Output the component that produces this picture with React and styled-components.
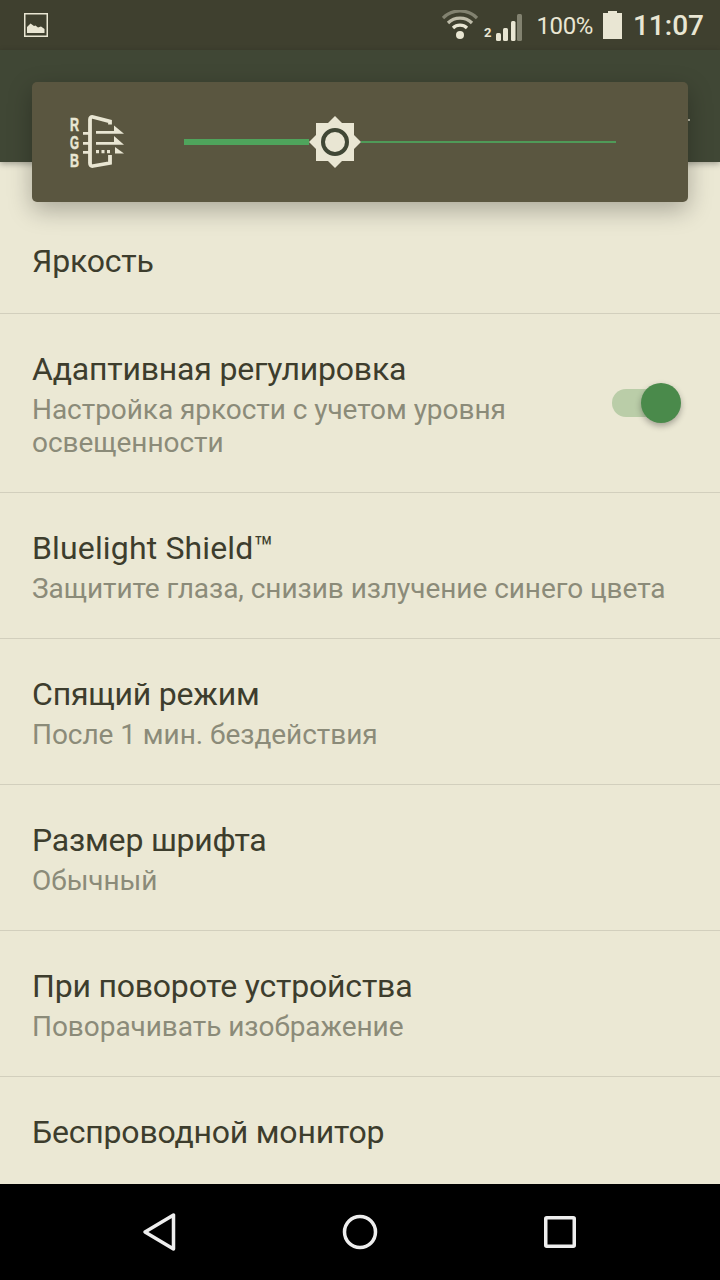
import React from 'react'
import styled, { createGlobalStyle } from 'styled-components'

const GlobalStyle = createGlobalStyle`
  html, body { margin: 0; padding: 0; background: #000; }
  body { font-family: Roboto, "Noto Sans", sans-serif; }
`

const rows = [
  { title: 'Адаптивная регулировка', sub: 'Настройка яркости с учетом уровня освещенности', toggle: true },
  { title: 'Bluelight Shield™', sub: 'Защитите глаза, снизив излучение синего цвета', wide: true },
  { title: 'Спящий режим', sub: 'После 1 мин. бездействия' },
  { title: 'Размер шрифта', sub: 'Обычный' },
  { title: 'При повороте устройства', sub: 'Поворачивать изображение' },
  { title: 'Беспроводной монитор' },
]

function PictureIcon() {
  return (
    <svg width="24" height="24" viewBox="0 0 24 24">
      <rect x="0.75" y="0.75" width="22.5" height="22.5" fill="none" stroke="#e9e6d3" strokeWidth="1.5" />
      <path d="M3 20V14L6.5 10.5L10 13L11.5 12.5L14 14.5L17 13.5L20.5 16V20Z" fill="#e9e6d3" />
    </svg>
  )
}

function WifiIcon() {
  return (
    <svg width="36" height="30" viewBox="0 0 36 30" fill="none" stroke="#e9e6d3" strokeWidth="3.2">
      <path d="M1 8A24 24 0 0 1 35 8" opacity="0.4" />
      <path d="M6 13A17 17 0 0 1 30 13" opacity="0.75" />
      <path d="M11 18A10 10 0 0 1 25 18" />
      <circle cx="18" cy="25" r="4" fill="#e9e6d3" stroke="none" />
    </svg>
  )
}

function SignalIcon() {
  return (
    <SignalSvg width="26" height="27" viewBox="0 0 26 27" fill="#e9e6d3">
      <rect x="0" y="19" width="5" height="8" rx="1.5" />
      <rect x="7" y="14" width="5" height="13" rx="1.5" />
      <rect x="15" y="7" width="4.5" height="20" rx="1.5" />
      <rect x="21" y="0" width="5" height="27" rx="1.5" opacity="0.4" />
    </SignalSvg>
  )
}

function BatteryIcon() {
  return (
    <svg width="19" height="28" viewBox="0 0 19 28" fill="#e9e6d3">
      <path d="M5 0H14V2H19V28H0V2H5Z" />
    </svg>
  )
}

function RgbIcon() {
  return (
    <svg width="58" height="56" viewBox="0 0 58 56">
      <g fill="#e9e6d3" stroke="#e9e6d3" strokeWidth="0.5" fontFamily="Liberation Sans, sans-serif" fontWeight="700" fontSize="18">
        <text x="4" y="17" textLength="9" lengthAdjust="spacingAndGlyphs">R</text>
        <text x="4" y="35" textLength="9" lengthAdjust="spacingAndGlyphs">G</text>
        <text x="4" y="53" textLength="9" lengthAdjust="spacingAndGlyphs">B</text>
      </g>
      <g fill="#e9e6d3">
        <path d="M30 17H48V11.500L58 19.800H30Z" />
        <path d="M30 28H48V22L58 30.800H30Z" />
        <path d="M30 36H33V39.300H30ZM35.500 36H38.500V39.300H35.500ZM41 36H44V39.300H41Z" />
        <path d="M49 33L58 39.500H49Z" />
        <path d="M17 18H23V20.800H17ZM17 28H23V30.800H17ZM17 37H23V39.800H17Z" />
      </g>
      <path
        d="M44 10.500V7.500L27 3Q24 2.500 24 5.500V49Q24 52.500 27 52L44 49V41"
        fill="none"
        stroke="#e9e6d3"
        strokeWidth="3.800"
      />
    </svg>
  )
}

function SunThumb() {
  return (
    <svg width="52" height="52" viewBox="0 0 52 52">
      <rect x="7" y="7" width="38" height="38" fill="#e9e6d3" />
      <path d="M26 0L52 26L26 52L0 26Z" fill="#e9e6d3" />
      <circle cx="26" cy="26" r="12" fill="none" stroke="#404735" strokeWidth="4" />
    </svg>
  )
}

function Row({ title, sub, toggle, wide }) {
  return (
    <SettingRow>
      <RowText $withToggle={toggle}>
        <RowTitle $wide={wide}>{title}</RowTitle>
        {sub && <RowSub>{sub}</RowSub>}
      </RowText>
      {toggle && (
        <Switch>
          <SwitchThumb />
        </Switch>
      )}
    </SettingRow>
  )
}

export default function App() {
  return (
    <Page>
      <GlobalStyle />
      <StatusBar>
        <PictureIcon />
        <StatusRight>
          <WifiIcon />
          <SimNumber>2</SimNumber>
          <SignalIcon />
          <Percent>100%</Percent>
          <BatteryIcon />
          <Clock>11:07</Clock>
        </StatusRight>
      </StatusBar>
      <Toolbar>
        <ToolbarDot />
      </Toolbar>
      <List>
        <Category>Экран</Category>
        <BrightnessRow>
          <RowTitle>Яркость</RowTitle>
        </BrightnessRow>
        {rows.map((r) => (
          <Row key={r.title} {...r} />
        ))}
      </List>
      <NavBar>
        <svg width="36" height="40" viewBox="0 0 36 40" fill="none" stroke="#eeeeee" strokeWidth="3.5" strokeLinejoin="round">
          <path d="M3 20L31.500 3V37Z" />
        </svg>
        <svg width="36" height="36" viewBox="0 0 36 36" fill="none" stroke="#eeeeee" strokeWidth="3.5">
          <circle cx="18" cy="18" r="15.500" />
        </svg>
        <svg width="36" height="36" viewBox="0 0 36 36" fill="none" stroke="#eeeeee" strokeWidth="3.5" strokeLinejoin="round">
          <rect x="3.750" y="3.750" width="28.500" height="28.500" rx="1" />
        </svg>
      </NavBar>
      <BrightnessPanel>
        <RgbSlot>
          <RgbIcon />
        </RgbSlot>
        <Slider>
          <TrackDone />
          <SunThumb />
          <TrackRest />
        </Slider>
      </BrightnessPanel>
    </Page>
  )
}

const Page = styled.div`
  position: relative;
  width: 720px;
  height: 1280px;
  display: flex;
  flex-direction: column;
  overflow: hidden;
  background: #ebe8d4;
`

const StatusBar = styled.div`
  height: 50px;
  flex-shrink: 0;
  display: flex;
  align-items: center;
  justify-content: space-between;
  padding: 0 16px 0 24px;
  box-sizing: border-box;
  background: #3f402f;
  color: #e9e6d3;
`

const StatusRight = styled.div`
  display: flex;
  align-items: center;
`

const SignalSvg = styled.svg`
  margin-top: 5px;
`

const SimNumber = styled.span`
  font: 700 13px/13px Roboto, sans-serif;
  align-self: flex-end;
  margin: 0 4px 3px 6px;
`

const Percent = styled.span`
  font: 400 24px/30px Roboto, sans-serif;
  letter-spacing: -0.4px;
  margin: 2px 10px 0 15px;
`

const Clock = styled.span`
  font: 500 28px/32px Roboto, sans-serif;
  margin: 2px 0 0 11px;
`

const Toolbar = styled.div`
  height: 112px;
  flex-shrink: 0;
  display: flex;
  justify-content: flex-end;
  padding: 69px 30px 0 0;
  box-sizing: border-box;
  background: #404735;
  box-shadow: 0 2px 6px rgba(0, 0, 0, 0.3);
  position: relative;
  z-index: 1;
`

const ToolbarDot = styled.div`
  width: 2px;
  height: 2px;
  background: #b9b8a6;
`

const List = styled.div`
  flex: 1;
  min-height: 0;
  overflow: hidden;
`

const Category = styled.div`
  height: 44px;
  padding: 3px 32px 0;
  box-sizing: border-box;
  font: 500 28px/44px Roboto, sans-serif;
  color: #4a8a4b;
`

const SettingRow = styled.div`
  display: flex;
  align-items: center;
  padding: 33px 39px 33px 32px;
  border-bottom: 1px solid #d2cfbd;
`

const BrightnessRow = styled(SettingRow)`
  padding-bottom: 30px;
`

const RowText = styled.div`
  flex: 1;
  min-width: 0;
  padding-right: ${(p) => (p.$withToggle ? '40px' : '0')};
`

const RowTitle = styled.div`
  font: 400 32px/44px Roboto, sans-serif;
  letter-spacing: ${(p) => (p.$wide ? '0.15px' : '-0.2px')};
  color: #3d3d2d;
`

const RowSub = styled.div`
  margin-top: 2px;
  font: 400 28px/33px Roboto, sans-serif;
  letter-spacing: -0.05px;
  color: #8b8b79;
`

const Switch = styled.div`
  position: relative;
  width: 64px;
  height: 28px;
  margin: 0 5px 1px 0;
  flex-shrink: 0;
  border-radius: 14px;
  background: #bacda8;
`

const SwitchThumb = styled.div`
  position: absolute;
  top: -6px;
  right: -5px;
  width: 40px;
  height: 40px;
  border-radius: 50%;
  background: #4a8a4b;
  box-shadow: 0 3px 6px rgba(0, 0, 0, 0.3);
`

const NavBar = styled.div`
  height: 96px;
  flex-shrink: 0;
  display: flex;
  align-items: center;
  justify-content: center;
  gap: 164px;
  background: #000;
  position: relative;
  z-index: 1;
`

const BrightnessPanel = styled.div`
  position: absolute;
  top: 82px;
  left: 32px;
  width: 656px;
  height: 120px;
  z-index: 2;
  display: flex;
  align-items: center;
  padding: 0 72px 0 34px;
  box-sizing: border-box;
  border-radius: 5px;
  background: #5a5640;
  box-shadow: 0 8px 24px rgba(0, 0, 0, 0.28);
`

const RgbSlot = styled.div`
  width: 118px;
  flex-shrink: 0;
  display: flex;
`

const Slider = styled.div`
  flex: 1;
  display: flex;
  align-items: center;
`

const TrackDone = styled.div`
  width: 125px;
  height: 6px;
  background: #4fa45c;
`

const TrackRest = styled.div`
  flex: 1;
  height: 2px;
  background: #4f9a58;
`
